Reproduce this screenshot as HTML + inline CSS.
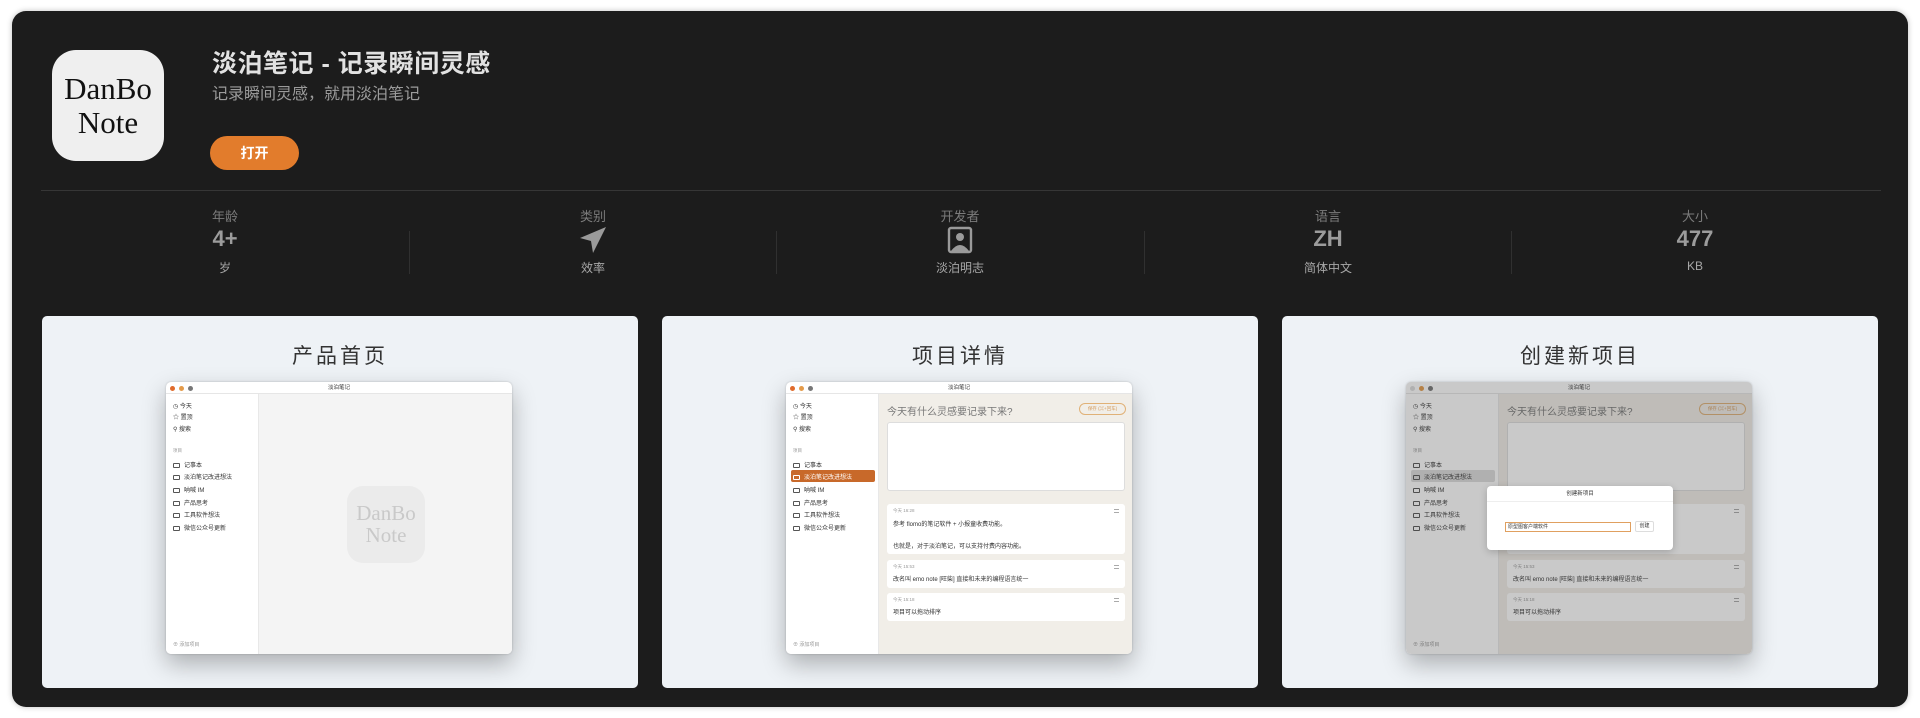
<!DOCTYPE html>
<html><head><meta charset="utf-8"><style>
*{margin:0;padding:0;box-sizing:border-box}
body{width:1920px;height:718px;background:#fff;font-family:"Liberation Sans","Noto Sans CJK SC",sans-serif;position:relative;overflow:hidden}
.panel{position:absolute;left:12px;top:11px;width:1896px;height:696px;background:#1c1c1c;border-radius:14px;box-shadow:0 0 6px rgba(0,0,0,.25)}
.abs{position:absolute}
.icon{left:40px;top:39px;width:112px;height:111px;background:#efefef;border-radius:24px;font-family:"Liberation Serif","DejaVu Serif",serif;color:#111;font-size:31px;line-height:34px;text-align:center;padding-top:22px}
.title{left:200px;top:33px;font-size:25px;font-weight:bold;color:#e2e2e2;letter-spacing:.5px}
.sub{left:200px;top:69px;font-size:16px;color:#9b9b9b}
.btn{left:198px;top:125px;width:89px;height:34px;border-radius:17px;background:#e27c2c;color:#fff;font-weight:bold;font-size:14px;text-align:center;line-height:34px}
.div{left:29px;top:179px;width:1840px;height:1px;background:#363636}
.col{top:195px;width:368px;text-align:center}
.col .l{font-size:13px;color:#7b7b7b;height:18px}
.col .v{font-size:22px;font-weight:bold;color:#9c9c9c;height:30px;line-height:30px}
.col .s{font-size:12px;color:#a8a8a8;margin-top:5px}
.sep{top:220px;width:1px;height:43px;background:#303030}
.card{top:305px;width:596px;height:372px;background:#eef2f6;border-radius:5px}
.ct{position:absolute;top:24px;left:0;width:100%;text-align:center;font-size:21px;color:#333;letter-spacing:3px}
.win{position:absolute;left:124px;top:66px;width:346px;height:272px;border-radius:5px;background:#fff;box-shadow:0 10px 24px rgba(0,0,0,.28),0 0 2px rgba(0,0,0,.2);overflow:hidden;font-size:6px;color:#333}
.tb{position:absolute;left:0;top:0;width:100%;height:12px;border-bottom:1px solid #e6e6e6;text-align:center;line-height:12px;font-size:5.5px;color:#333}
.dot{position:absolute;top:4px;width:5px;height:5px;border-radius:50%}
.sb{position:absolute;left:0;top:12px;width:93px;height:260px;background:#fff;border-right:1px solid #e8e8e8}
.it{position:absolute;left:7px;font-size:6px;color:#333;white-space:nowrap}
.it i{display:inline-block;width:7px;height:5px;border:0.8px solid #555;border-radius:1px;margin-right:4px;vertical-align:-1px}
.main{position:absolute;left:93px;top:12px;right:0;bottom:0;background:#f4f4f4}
.ghost{position:absolute;left:88px;top:92px;width:78px;height:77px;border-radius:16px;background:#ebebeb;font-family:"Liberation Serif",serif;font-size:21px;line-height:22px;color:#c9c9c9;text-align:center;padding-top:16px}
.beige{background:#f1eee8}
.q{position:absolute;left:8px;top:9px;font-size:10px;color:#777}
.save{position:absolute;left:200px;top:9px;width:47px;height:12px;border:1px solid #e0b177;border-radius:6px;font-size:4.5px;color:#d49a5a;text-align:center;line-height:10px}
.ta{position:absolute;left:8px;top:28px;width:238px;height:69px;background:#fff;border:1px solid #ddd;border-radius:3px}
.nc{position:absolute;left:8px;width:238px;background:#fff;border-radius:3px}
.nc .t{position:absolute;left:6px;top:4px;font-size:4.5px;color:#999}
.nc .x{position:absolute;left:6px;font-size:6px;color:#333;white-space:nowrap}
.nc .m{position:absolute;right:6px;top:5px;width:5px;height:4px;border-top:1px solid #aaa;border-bottom:1px solid #aaa}
.sel{position:absolute;left:5px;top:76px;width:84px;height:12px;background:#c8692a;border-radius:2px}
</style></head><body>
<div class="panel">
<div class="abs icon">DanBo<br>Note</div>
<div class="abs title">淡泊笔记 - 记录瞬间灵感</div>
<div class="abs sub">记录瞬间灵感，就用淡泊笔记</div>
<div class="abs btn">打开</div>
<div class="abs div"></div>
<div class="abs col" style="left:29px"><div class="l">年龄</div><div class="v">4+</div><div class="s">岁</div></div>
<div class="abs col" style="left:397px"><div class="l">类别</div><div class="v"><svg width="30" height="30" viewBox="0 0 30 30" style="vertical-align:middle"><path d="M28 2 L2 13 L13 16 L15 28 Z" fill="#9a9a9a"/></svg></div><div class="s">效率</div></div>
<div class="abs col" style="left:764px"><div class="l">开发者</div><div class="v"><svg width="26" height="28" viewBox="0 0 26 28" style="vertical-align:middle"><rect x="2" y="2" width="22" height="24" rx="2" fill="none" stroke="#9a9a9a" stroke-width="2.4"/><circle cx="13" cy="11" r="4" fill="#9a9a9a"/><path d="M4 25 Q13 13 22 25Z" fill="#9a9a9a"/></svg></div><div class="s">淡泊明志</div></div>
<div class="abs col" style="left:1132px"><div class="l">语言</div><div class="v">ZH</div><div class="s">简体中文</div></div>
<div class="abs col" style="left:1499px"><div class="l">大小</div><div class="v">477</div><div class="s">KB</div></div>
<div class="abs sep" style="left:397px"></div><div class="abs sep" style="left:764px"></div><div class="abs sep" style="left:1132px"></div><div class="abs sep" style="left:1499px"></div>

<div class="abs card" style="left:30px"><div class="ct">产品首页</div>
<div class="win"><div class="tb">淡泊笔记</div>
<div class="dot" style="left:4px;background:#e06b2c"></div><div class="dot" style="left:13px;background:#e49b4a"></div><div class="dot" style="left:22px;background:#777"></div>
<div class="sb">
<div class="it" style="top:7px">◷ 今天</div><div class="it" style="top:18px">☆ 置顶</div><div class="it" style="top:30px">⚲ 搜索</div>
<div class="it" style="top:54px;font-size:4.5px;color:#999">项目</div>
<div class="it" style="top:66px"><i></i>记事本</div><div class="it" style="top:78px"><i></i>淡泊笔记改进想法</div><div class="it" style="top:91px"><i></i>呐喊 IM</div><div class="it" style="top:104px"><i></i>产品思考</div><div class="it" style="top:116px"><i></i>工具软件想法</div><div class="it" style="top:129px"><i></i>微信公众号更新</div>
<div class="it" style="top:247px;font-size:5px;color:#999">⊕ 添加项目</div></div>
<div class="main"><div class="ghost">DanBo<br>Note</div></div>
</div></div>

<div class="abs card" style="left:650px"><div class="ct">项目详情</div>
<div class="win"><div class="tb">淡泊笔记</div>
<div class="dot" style="left:4px;background:#e06b2c"></div><div class="dot" style="left:13px;background:#e49b4a"></div><div class="dot" style="left:22px;background:#777"></div>
<div class="sb"><div class="sel"></div>
<div class="it" style="top:7px">◷ 今天</div><div class="it" style="top:18px">☆ 置顶</div><div class="it" style="top:30px">⚲ 搜索</div>
<div class="it" style="top:54px;font-size:4.5px;color:#999">项目</div>
<div class="it" style="top:66px"><i></i>记事本</div><div class="it" style="top:78px;color:#fff"><i style="border-color:#fff"></i>淡泊笔记改进想法</div><div class="it" style="top:91px"><i></i>呐喊 IM</div><div class="it" style="top:104px"><i></i>产品思考</div><div class="it" style="top:116px"><i></i>工具软件想法</div><div class="it" style="top:129px"><i></i>微信公众号更新</div>
<div class="it" style="top:247px;font-size:5px;color:#999">⊕ 添加项目</div></div>
<div class="main beige"><div class="q">今天有什么灵感要记录下来?</div><div class="save">保存 (⌘+回车)</div><div class="ta"></div>
<div class="nc" style="top:110px;height:50px"><div class="t">今天 16:28</div><div class="m"></div><div class="x" style="top:15px">参考 flomo的笔记软件 + 小报童收费功能。</div><div class="x" style="top:37px">也就是，对于淡泊笔记，可以支持付费内容功能。</div></div>
<div class="nc" style="top:166px;height:28px"><div class="t">今天 15:53</div><div class="m"></div><div class="x" style="top:14px">改名叫 emo note [旺柴] 直接和未来的编程语言统一</div></div>
<div class="nc" style="top:199px;height:28px"><div class="t">今天 15:18</div><div class="m"></div><div class="x" style="top:14px">项目可以拖动排序</div></div>
</div></div></div>

<div class="abs card" style="left:1270px"><div class="ct">创建新项目</div>
<div class="win"><div class="tb">淡泊笔记</div>
<div class="dot" style="left:4px;background:#ddd"></div><div class="dot" style="left:13px;background:#e49b4a"></div><div class="dot" style="left:22px;background:#777"></div>
<div class="sb"><div class="sel" style="background:#ddd"></div>
<div class="it" style="top:7px">◷ 今天</div><div class="it" style="top:18px">☆ 置顶</div><div class="it" style="top:30px">⚲ 搜索</div>
<div class="it" style="top:54px;font-size:4.5px;color:#999">项目</div>
<div class="it" style="top:66px"><i></i>记事本</div><div class="it" style="top:78px"><i></i>淡泊笔记改进想法</div><div class="it" style="top:91px"><i></i>呐喊 IM</div><div class="it" style="top:104px"><i></i>产品思考</div><div class="it" style="top:116px"><i></i>工具软件想法</div><div class="it" style="top:129px"><i></i>微信公众号更新</div>
<div class="it" style="top:247px;font-size:5px;color:#999">⊕ 添加项目</div></div>
<div class="main beige"><div class="q">今天有什么灵感要记录下来?</div><div class="save">保存 (⌘+回车)</div><div class="ta"></div>
<div class="nc" style="top:110px;height:50px"><div class="t">今天 16:28</div><div class="m"></div></div>
<div class="nc" style="top:166px;height:28px"><div class="t">今天 15:53</div><div class="m"></div><div class="x" style="top:14px">改名叫 emo note [旺柴] 直接和未来的编程语言统一</div></div>
<div class="nc" style="top:199px;height:28px"><div class="t">今天 15:18</div><div class="m"></div><div class="x" style="top:14px">项目可以拖动排序</div></div>
</div>
<div style="position:absolute;left:0;top:0;width:100%;height:100%;background:rgba(60,60,60,.28)"></div>
<div style="position:absolute;left:81px;top:104px;width:186px;height:64px;background:#fff;border-radius:4px;box-shadow:0 2px 8px rgba(0,0,0,.2)">
<div style="height:16px;border-bottom:1px solid #eee;text-align:center;line-height:16px;font-size:5.5px">创建新项目</div>
<div style="position:absolute;left:18px;top:36px;width:126px;height:10px;border:1px solid #e0a060;font-size:5px;line-height:8px;padding-left:2px">原型图客户端软件</div>
<div style="position:absolute;left:148px;top:35px;width:19px;height:11px;border:1px solid #ddd;border-radius:2px;font-size:5px;text-align:center;line-height:9px">创建</div>
</div>
</div></div>
</div>
</body></html>
